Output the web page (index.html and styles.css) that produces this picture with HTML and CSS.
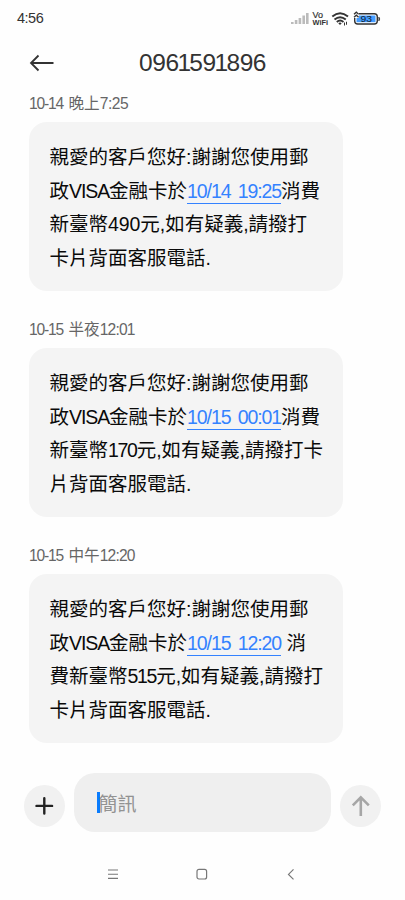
FILE: index.html
```html
<!DOCTYPE html>
<html lang="zh-Hant">
<head>
<meta charset="utf-8">
<title>簡訊</title>
<link rel="stylesheet" href="styles.css">
</head>
<body>
<div class="status">
  <span class="clock">4:56</span>
  <svg class="indicators" width="92" height="20" viewBox="0 0 92 20">
    <g fill="#bbb"><rect x="1" y="13" width="2.6" height="2"/><rect x="4.8" y="11" width="2.6" height="4"/><rect x="8.6" y="9" width="2.6" height="6"/><rect x="12.4" y="6.5" width="2.6" height="8.5"/><rect x="16" y="4" width="2.6" height="11"/></g>
    <text x="22.500" y="8.5" class="net" textLength="10.500" lengthAdjust="spacingAndGlyphs">Vo</text><text x="22.500" y="16.300" class="net bold" textLength="15.500" lengthAdjust="spacingAndGlyphs">WiFi</text>
    <g fill="none" stroke="#333" stroke-width="1.9"><path d="M42.300 7.500Q50 0.800 58 7.500M44.500 10.500Q50 5.800 55.800 10.500M46.800 13Q50 10.200 53.500 13"/></g>
    <path d="M48.300 14.200Q50 13 51.700 14.200L50 16ZM54 13.500h1v3h-1ZM56 12.800h1v3h-1Z" fill="#333"/>
    <rect x="64.700" y="4.700" width="22.6" height="10.300" rx="3" fill="#fff" stroke="#333" stroke-width="1.4"/>
    <path d="M66.500 6.500H85.500V13.200H66.500Z" fill="#439cff"/>
    <path d="M62.500 2.500h6.500v6.500h-6.500Z" fill="#fff"/>
    <path d="M64 5.200L66.300 3.200L68.600 5.200M64 8.200L66.300 6.200L68.600 8.200" fill="none" stroke="#333" stroke-width="1.3"/>
    <path d="M88.800 8q2 2 0 4Z" fill="#333" stroke="#333" stroke-width=".6"/>
    <text x="70.500" y="12.900" class="level" textLength="11.500" lengthAdjust="spacingAndGlyphs">93</text>
  </svg>
</div>
<header class="header">
  <svg class="back" width="26" height="20" viewBox="0 0 26 20"><path d="M9.500 2.500L2 10L9.500 17.500M2 10H24.500" fill="none" stroke="#333" stroke-width="1.8"/></svg>
  <h1 class="title">096<i>1</i>59<i>1</i>896</h1>
</header>
<main class="thread">
  <section class="message">
    <div class="date"><span class="day">10-14</span>晚上<span class="time">7:25</span></div>
    <div class="bubble">
      <div>親愛的客戶您好:謝謝您使用郵</div>
      <div>政<span class="visa">VISA</span>金融卡於<a class="link">10/14 19:25</a>消費</div>
      <div>新臺幣<span class="sum">490</span>元,如有疑義,請撥打</div>
      <div>卡片背面客服電話.</div>
    </div>
  </section>
  <section class="message">
    <div class="date"><span class="day">10-15</span>半夜<span class="time noon">12:01</span></div>
    <div class="bubble">
      <div>親愛的客戶您好:謝謝您使用郵</div>
      <div>政<span class="visa">VISA</span>金融卡於<a class="link">10/15 00:01</a>消費</div>
      <div>新臺幣<span class="sum tight">170</span>元,如有疑義,請撥打卡</div>
      <div>片背面客服電話.</div>
    </div>
  </section>
  <section class="message">
    <div class="date"><span class="day">10-15</span>中午<span class="time noon">12:20</span></div>
    <div class="bubble">
      <div>親愛的客戶您好:謝謝您使用郵</div>
      <div>政<span class="visa">VISA</span>金融卡於<a class="link">10/15 12:20</a> 消</div>
      <div>費新臺幣<span class="sum tight">515</span>元,如有疑義,請撥打</div>
      <div>卡片背面客服電話.</div>
    </div>
  </section>
</main>
<div class="composer">
  <div class="round add"><svg width="41" height="42" viewBox="0 0 41 42"><path d="M20.300 13.300V28.500M12.500 20.900H28.100" stroke="#222" stroke-width="2.4" stroke-linecap="round"/></svg></div>
  <div class="input"><span class="caret"></span>簡訊</div>
  <div class="round send"><svg width="41" height="42" viewBox="0 0 41 42"><path d="M20.800 31V12.500M12.800 20.300L20.800 12.300L28.800 20.300" fill="none" stroke="#a6a6a6" stroke-width="2.6"/></svg></div>
</div>
<nav class="nav">
  <svg width="12" height="12" viewBox="0 0 12 12"><path d="M1 2H11M1 6.200H11M1 10.400H11" stroke="#777" stroke-width="1.1"/></svg>
  <svg width="12" height="12" viewBox="0 0 12 12"><rect x="1" y="1.400" width="9.600" height="9.600" rx="2" fill="none" stroke="#777" stroke-width="1.2"/></svg>
  <svg width="12" height="12" viewBox="0 0 12 12"><path d="M8.500 1.400L3.500 6.400L8.500 11.400" fill="none" stroke="#777" stroke-width="1.2"/></svg>
</nav>
</body>
</html>
```
FILE: styles.css
```css
* { box-sizing: border-box; }
body {
  margin: 0;
  width: 405px;
  height: 900px;
  overflow: hidden;
  background: #fefefe;
  color: #0a0a0a;
  font-family: "Liberation Sans", "Noto Sans CJK TC", sans-serif;
}
.status {
  display: flex;
  justify-content: space-between;
  height: 36px;
  padding: 9px 23px 0 17px;
}
.clock { font-size: 14.5px; line-height: 18px; letter-spacing: -0.5px; color: #333; }
.net { font: 400 8.5px "Liberation Sans", sans-serif; fill: #333; stroke: #333; stroke-width: 0.2px; }
.net.bold { font-weight: 700; font-size: 8px; stroke: none; }
.level { font: 9px "Liberation Sans", sans-serif; fill: #123; }
.header {
  display: flex;
  align-items: center;
  height: 53px;
  padding: 1px 0 0 28.5px;
}
.title {
  margin: 0 0 0 84.5px;
  font-size: 24.5px;
  font-weight: 400;
  line-height: 36px;
  letter-spacing: -0.4px;
  color: #333;
}
.title i { font-style: normal; letter-spacing: -1.8px; margin-left: -1.2px; }
.thread { padding-left: 29px; }
.message { height: 226px; }
.date {
  height: 33px;
  font-size: 15.6px;
  line-height: 30px;
  color: #666;
  white-space: nowrap;
}
.date span { display: inline-block; letter-spacing: -0.5px; }
.date .day { width: 39.5px; letter-spacing: -1.2px; }
.date .noon { letter-spacing: -0.8px; }
.bubble {
  width: 314px;
  height: 169px;
  padding: 19px 0 0 20.5px;
  border-radius: 18px;
  background: #f4f4f4;
  font-size: 19.5px;
  line-height: 33.7px;
  white-space: nowrap;
}
.bubble div { height: 33.7px; }
.visa { letter-spacing: -1.1px; }
.link {
  display: inline-block;
  height: 24px;
  line-height: 23px;
  color: #3482ff;
  border-bottom: 1px solid #3482ff;
  letter-spacing: -1.1px;
  word-spacing: 3px;
}
.sum { letter-spacing: -0.1px; }
.sum.tight { letter-spacing: -1.3px; }
.composer {
  display: flex;
  align-items: center;
  gap: 9px;
  padding: 6px 0 0 24px;
}
.round { width: 41px; height: 42px; margin-top: 7px; border-radius: 50%; background: #f1f1f1; }
.round svg { display: block; }
.input {
  display: flex;
  align-items: center;
  width: 257px;
  height: 59px;
  padding: 0 0 0 23px;
  border-radius: 21px;
  background: #efefef;
  color: #929292;
  font-size: 19px;
}
.caret { width: 2.5px; height: 21px; margin: 0 -1px 1px 0; background: #0a7cff; }
.nav {
  display: flex;
  gap: 77px;
  padding: 36px 0 0 107px;
}
```
